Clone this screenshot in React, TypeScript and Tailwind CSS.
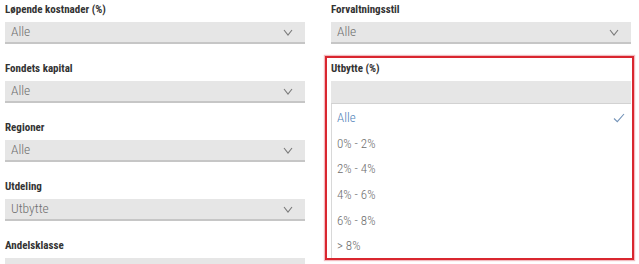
import React from "react";

const font = {
  fontFamily: '"Roboto", "Liberation Sans", sans-serif',
};

const Chevron = () => (
  <svg width="10" height="7" viewBox="0 0 10 7" fill="none" className="shrink-0">
    <path d="M1 1 L5 6 L9 1" stroke="#7a7a7a" strokeWidth="1.1" />
  </svg>
);

const Select = ({ value }: { value?: string }) => (
  <div className="flex h-[22px] items-center justify-between border-b-2 border-[#c6c6c6] bg-[#e6e6e6] pl-[6px] pr-[12px]">
    <span className="text-[13.5px] font-light leading-none text-[#6e6e6e]">{value}</span>
    {value !== undefined && value !== "" && <Chevron />}
  </div>
);

const Label = ({ children }: { children: React.ReactNode }) => (
  <p className="mb-[5px] h-[14px] text-[11px] font-bold leading-[14px] text-[#333]">{children}</p>
);

const Field = ({ label, value }: { label: string; value?: string }) => (
  <div className="flex flex-col">
    <Label>{label}</Label>
    <Select value={value} />
  </div>
);

const options = ["Alle", "0% - 2%", "2% - 4%", "4% - 6%", "6% - 8%", "> 8%"];

export default function App() {
  return (
    <div className="h-[264px] w-[639px] overflow-hidden bg-white font-stretch-condensed" style={font}>
      <div className="grid grid-cols-[300px_300px] gap-x-[26px] px-[5px] pt-[3px]">
        <div className="flex flex-col gap-[18px]">
          <Field label="Løpende kostnader (%)" value="Alle" />
          <Field label="Fondets kapital" value="Alle" />
          <Field label="Regioner" value="Alle" />
          <Field label="Utdeling" value="Utbytte" />
          <Field label="Andelsklasse" value="" />
        </div>
        <div className="flex flex-col gap-[18px]">
          <Field label="Forvaltningsstil" value="Alle" />
          <div className="relative">
            <Label>Utbytte (%)</Label>
            <div className="h-[23px] border-b border-[#d2d2d2] bg-[#e6e6e6]" />
            <ul className="border-l border-[#d8d8d8] bg-white pt-px">
              {options.map((o, i) => (
                <li key={o} className="flex h-[25.6px] items-center justify-between pl-[5px] pr-[6px]">
                  <span className={`text-[13px] font-light leading-none ${i === 0 ? "text-[#4f82b8]" : "text-[#6e6e6e]"}`}>{o}</span>
                  {i === 0 && (
                    <svg width="12" height="10" viewBox="0 0 12 10" fill="none">
                      <path d="M1 5.5 L4.3 8.6 L11 1" stroke="#7393b8" strokeWidth="1.1" />
                    </svg>
                  )}
                </li>
              ))}
            </ul>
            <div className="pointer-events-none absolute -left-[6px] -right-[3px] -top-[6px] h-[204px] border-2 border-[#d9262f] shadow-[0_0_1px_1px_rgba(230,120,130,0.5)]" />
          </div>
        </div>
      </div>
    </div>
  );
}
